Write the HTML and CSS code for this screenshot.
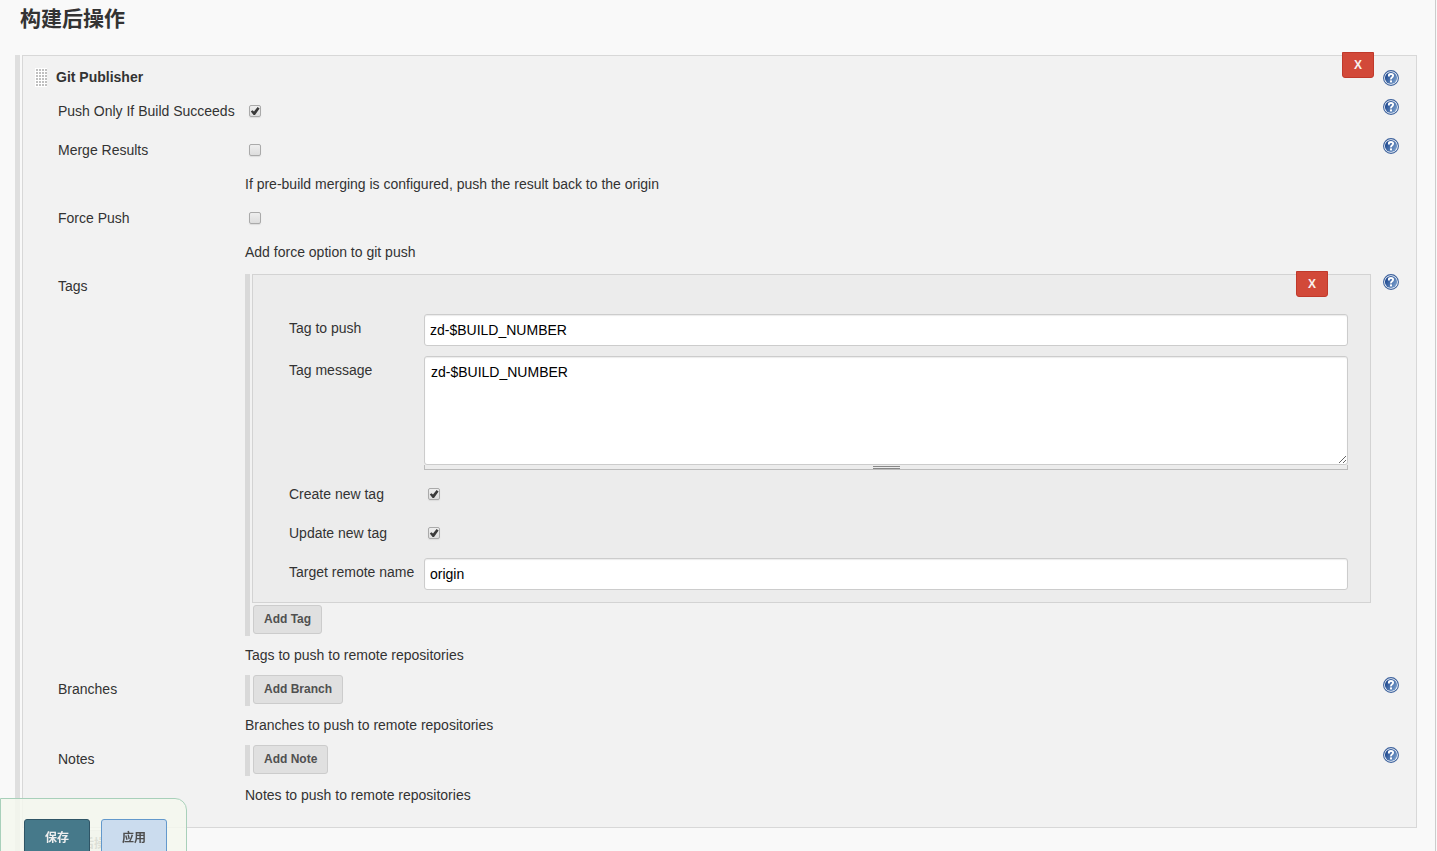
FILE: index.html
```html
<!DOCTYPE html>
<html lang="zh-CN">
<head>
<meta charset="utf-8">
<title>构建后操作</title>
<link rel="stylesheet" href="styles.css">
</head>
<body>
<svg class="defs" aria-hidden="true">
  <defs>
    <linearGradient id="help-fill" x1="0" y1="0.2" x2="1" y2="0.8">
      <stop offset="0" stop-color="#16418a"/>
      <stop offset="1" stop-color="#7fa3cf"/>
    </linearGradient>
    <symbol id="help-icon" viewBox="0 0 16 16">
      <circle cx="8" cy="8" r="7.4" fill="#fff" stroke="#3c619c" stroke-width="1.1"/>
      <circle cx="8" cy="8" r="6.1" fill="url(#help-fill)"/>
      <path d="M5.9 6.4V5.4Q5.9 4 8 4T10.1 5.6Q10.1 6.8 9 7.3T8 9.4" fill="none" stroke="#fff" stroke-width="1.9"/>
      <rect x="7" y="10.4" width="2" height="2" fill="#fff"/>
    </symbol>
  </defs>
</svg>
<main class="page">
  <h1 class="page-title">构建后操作</h1>
  <form class="publishers">
    <section class="publisher">
      <button type="button" class="delete">X</button>
      <header class="publisher-head">
        <span class="grip"></span>
        <h2 class="publisher-name">Git Publisher</h2>
        <a href="#" class="help" aria-label="Help: Git Publisher"><svg><use href="#help-icon"/></svg></a>
      </header>

      <div class="setting">
        <label class="name" for="push-only">Push Only If Build Succeeds</label>
        <div class="check-cell"><input class="check" type="checkbox" id="push-only" checked></div>
        <a href="#" class="help" aria-label="Help: Push Only If Build Succeeds"><svg><use href="#help-icon"/></svg></a>
      </div>
      <div class="setting">
        <label class="name" for="merge">Merge Results</label>
        <div>
          <div class="check-cell"><input class="check" type="checkbox" id="merge"></div>
          <p class="note">If pre-build merging is configured, push the result back to the origin</p>
        </div>
        <a href="#" class="help" aria-label="Help: Merge Results"><svg><use href="#help-icon"/></svg></a>
      </div>
      <div class="setting">
        <label class="name" for="force">Force Push</label>
        <div>
          <div class="check-cell"><input class="check" type="checkbox" id="force"></div>
          <p class="note">Add force option to git push</p>
        </div>
      </div>

      <div class="setting">
        <span class="name">Tags</span>
        <div>
          <div class="repeat">
            <div class="tag-box">
              <button type="button" class="delete">X</button>
              <div class="field">
                <label class="field-name" for="tag">Tag to push</label>
                <input class="text" type="text" id="tag" value="zd-$BUILD_NUMBER">
              </div>
              <div class="field">
                <label class="field-name" for="message">Tag message</label>
                <div class="message">
                  <textarea class="text area" id="message">zd-$BUILD_NUMBER</textarea>
                  <div class="resize"><span class="resize-grip"></span></div>
                </div>
              </div>
              <div class="field">
                <label class="field-name" for="create">Create new tag</label>
                <div class="field-check"><input class="check" type="checkbox" id="create" checked></div>
              </div>
              <div class="field">
                <label class="field-name" for="update">Update new tag</label>
                <div class="field-check"><input class="check" type="checkbox" id="update" checked></div>
              </div>
              <div class="field">
                <label class="field-name" for="remote">Target remote name</label>
                <input class="text" type="text" id="remote" value="origin">
              </div>
            </div>
            <button type="button" class="add">Add Tag</button>
          </div>
          <p class="note spaced">Tags to push to remote repositories</p>
        </div>
        <a href="#" class="help" aria-label="Help: Tags"><svg><use href="#help-icon"/></svg></a>
      </div>

      <div class="setting lowered">
        <span class="name">Branches</span>
        <div>
          <div class="repeat"><button type="button" class="add">Add Branch</button></div>
          <p class="note spaced">Branches to push to remote repositories</p>
        </div>
        <a href="#" class="help" aria-label="Help: Branches"><svg><use href="#help-icon"/></svg></a>
      </div>
      <div class="setting lowered">
        <span class="name">Notes</span>
        <div>
          <div class="repeat"><button type="button" class="add">Add Note</button></div>
          <p class="note spaced">Notes to push to remote repositories</p>
        </div>
        <a href="#" class="help" aria-label="Help: Notes"><svg><use href="#help-icon"/></svg></a>
      </div>
    </section>
    <button type="button" class="add">增加构建后操作步骤</button>
  </form>
</main>
<div class="save-bar">
  <button type="submit" class="action save">保存</button>
  <button type="button" class="action apply">应用</button>
</div>
</body>
</html>
```
FILE: styles.css
```css
* { box-sizing: border-box; }
html { scrollbar-width: none; }
body {
  margin: 0;
  background: #f9f9f9;
  color: #333;
  font: 14px/20px "Liberation Sans", Arial, "Noto Sans CJK SC", sans-serif;
}
button, input, textarea { font: inherit; margin: 0; }
.defs { position: absolute; width: 0; height: 0; }
.page {
  min-height: 100vh;
  margin-right: 1px;
  padding: 4px 18px 0 15px;
  border-right: 1px solid #ccc;
}
.page-title {
  margin: 0 5px 21px;
  font-size: 21px;
  line-height: 30px;
  font-weight: bold;
}
.publishers {
  padding-left: 2px;
  border-left: 5px solid #dfdfdf;
}
.publisher {
  position: relative;
  margin-bottom: 2px;
  padding: 11px 17px 22px 12px;
  border: 1px solid #d8d8d8;
  background: #f2f2f2;
}
.publisher-head {
  display: flex;
  align-items: flex-start;
  height: 32px;
}
.grip {
  width: 12px;
  height: 19px;
  margin: 1px 9px 0 0;
  background:
    linear-gradient(#fff 1px, transparent 0) 0 0 / 3px 3px,
    linear-gradient(90deg, #fff 1px, #c0c0c0 0) 0 0 / 3px 3px;
}
.publisher-name {
  flex: 1;
  margin: 0;
  font-size: 14px;
  line-height: 20px;
}
.publisher-head .help { margin-top: 3px; }
.help, .help svg {
  display: block;
  width: 16px;
  height: 16px;
}
.setting {
  display: grid;
  grid-template-columns: 187px minmax(0, 1fr) 16px;
  align-items: start;
  margin-left: 23px;
}
.setting > :nth-child(2) { margin-right: 12px; }
.name { padding-top: 2px; }
.lowered .name { padding-top: 4px; }
.lowered .help { margin-top: 2px; }
.check-cell {
  height: 39px;
  padding: 6px 4px;
}
.check-cell:has(+ .note) { height: 36px; }
.note { margin: 0 0 12px; }
.note.spaced { margin: 9px 0 10px; }
.lowered:last-child .note { margin-bottom: 0; }
.check {
  appearance: none;
  display: block;
  width: 12px;
  height: 12px;
  border: 1px solid #aaa;
  border-radius: 2px;
  background: linear-gradient(#eee, #ddd);
  box-shadow: 0 1px 1px #ddd;
}
.check:checked::after {
  content: "";
  display: block;
  width: 10px;
  height: 10px;
  background: #3a3a3a;
  clip-path: polygon(8% 56%, 24% 42%, 40% 56%, 76% 10%, 96% 24%, 50% 90%, 36% 90%);
}
.repeat {
  padding: 0 0 2px 2px;
  border-left: 5px solid #d9d9d9;
}
.add {
  display: block;
  height: 29px;
  margin-left: 1px;
  padding: 0 10px 2px;
  border: 1px solid #ccc;
  border-radius: 3px;
  background: #e0e0e0;
  color: #505050;
  font-size: 12px;
  font-weight: bold;
}
.tag-box {
  position: relative;
  margin-bottom: 2px;
  padding: 39px 22px 12px 36px;
  border: 1px solid #d3d3d3;
  background: #ececec;
}
.delete {
  position: absolute;
  top: -4px;
  right: 42px;
  width: 32px;
  height: 26px;
  padding: 0;
  border: 1px solid #c0392b;
  border-radius: 0 0 3px 3px;
  background: #d24939;
  color: #f9f0ee;
  font-size: 12px;
  font-weight: bold;
}
.field {
  display: grid;
  grid-template-columns: 135px minmax(0, 1fr);
  align-items: start;
}
.field-name { padding-top: 4px; }
.text {
  display: block;
  width: 100%;
  height: 32px;
  padding: 0 5px;
  border: 1px solid #ccc;
  border-radius: 3px;
  background: #fff;
  color: #000;
  box-shadow: inset 0 1px 1px rgba(0, 0, 0, .08);
}
.field:not(:last-child) > .text { margin-bottom: 10px; }
.area {
  height: 109px;
  padding: 5px 6px;
  resize: vertical;
}
.message { margin-bottom: 10px; }
.resize {
  display: flex;
  justify-content: center;
  height: 5px;
  border: 1px solid #bbb;
  border-top: 0;
}
.resize-grip {
  width: 27px;
  height: 3px;
  margin-top: 1px;
  border: solid #888;
  border-width: 1px 0;
}
.field-check {
  height: 39px;
  padding: 8px 4px;
}
.save-bar {
  position: fixed;
  left: 0;
  bottom: -20px;
  display: flex;
  gap: 11px;
  height: 73px;
  padding: 20px 19px 0 23px;
  border: 1px solid #a8d0ba;
  border-radius: 0 12px 0 0;
  background: rgba(244, 248, 239, .85);
}
.action {
  width: 66px;
  height: 38px;
  padding: 0;
  border: 1px solid;
  border-radius: 3px;
  font-size: 12px;
  font-weight: bold;
}
.save { border-color: #2f5566; background: #46798a; color: #eee; }
.apply { border-color: #6399cc; background: #cbdcee; color: #4d4d4d; }
```
